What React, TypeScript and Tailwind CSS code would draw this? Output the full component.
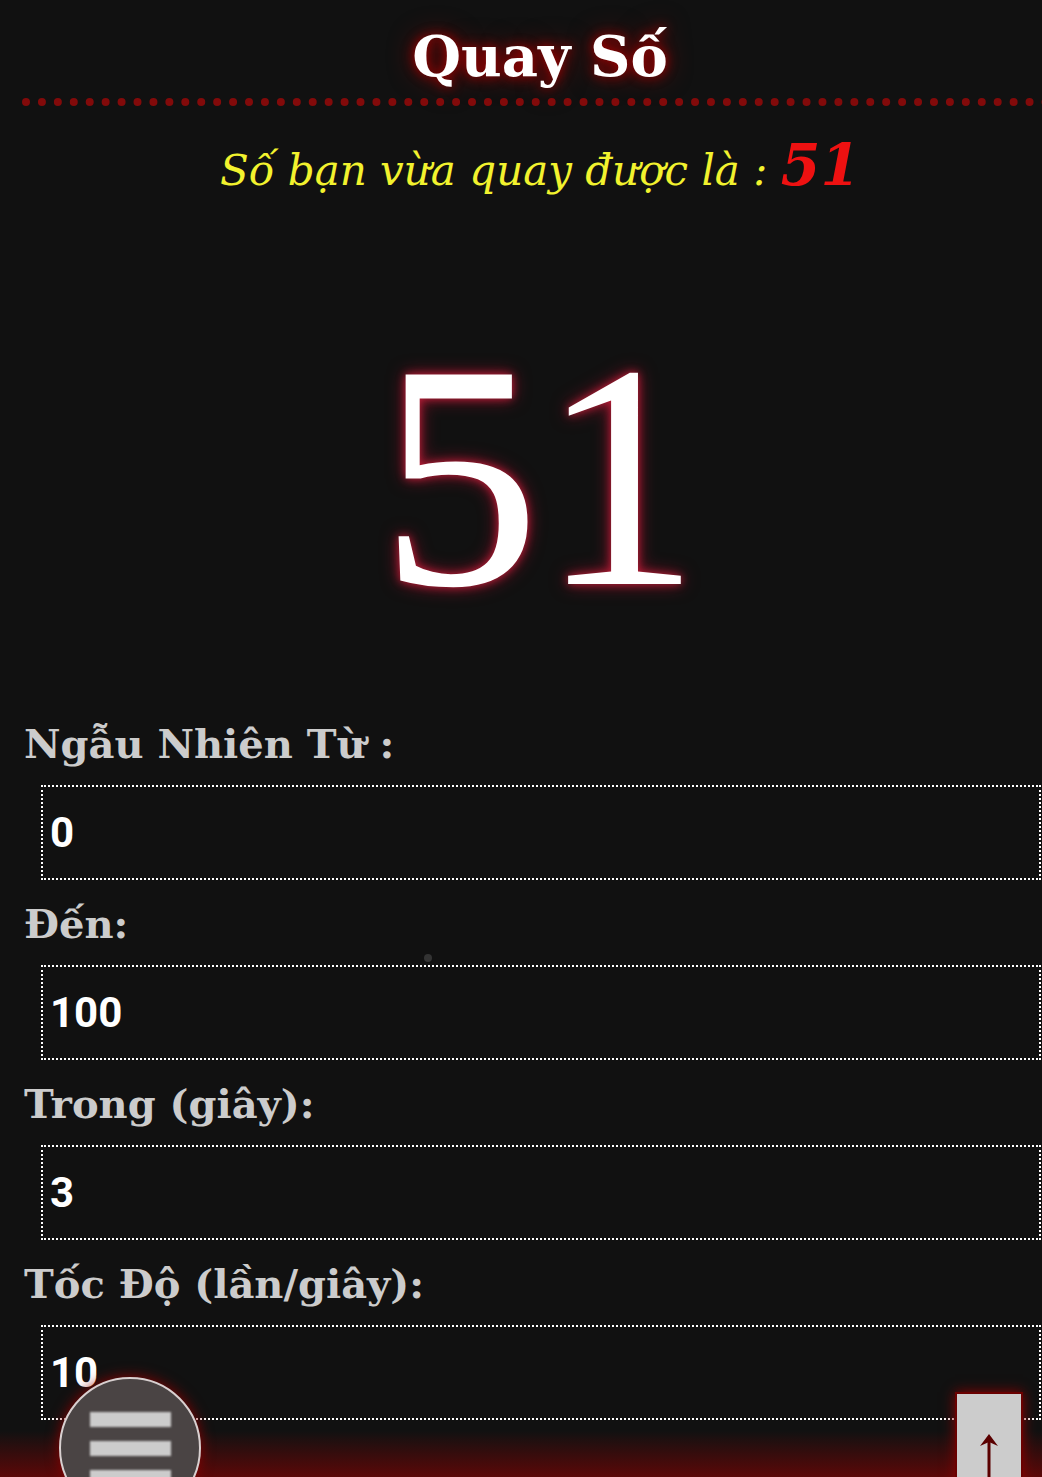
import React from "react";

const serif = "font-['DejaVu_Serif','Liberation_Serif',serif]";

const fields = [
  { label: "Ngẫu Nhiên Từ :", value: "0" },
  { label: "Đến:", value: "100" },
  { label: "Trong (giây):", value: "3" },
  { label: "Tốc Độ (lần/giây):", value: "10" },
];

export default function App() {
  return (
    <div className="relative min-h-[1477px] w-full overflow-hidden bg-[#111111]">
      {/* header */}
      <div className="pl-[38px] pt-[18px] text-center">
        <h1
          className={`${serif} text-[56px] font-bold leading-[76px] text-white [text-shadow:0_0_12px_#b00000,0_0_26px_#700000]`}
        >
          Quay Số
        </h1>
      </div>
      <div className="ml-[22px] mr-[-40px] mt-[4px] border-b-8 border-dotted border-[#820a0a] blur-[0.5px]" />

      <p className={`${serif} mt-[31px] pl-[38px] text-center text-[42px] italic leading-[56px] text-[#f2f22e]`}>
        Số bạn vừa quay được là :{" "}
        <span className="text-[57px] font-bold text-[#ee1111]">51</span>
      </p>

      {/* big number */}
      <div className="mt-[117px] pl-[38px] text-center">
        <span
          className="font-['Liberation_Serif',serif] text-[320px] leading-[320px] text-white [text-shadow:0_0_8px_#c0203a,0_0_18px_#8a1028]"
        >
          51
        </span>
      </div>

      {/* form */}
      <div className="mt-[83px] flex flex-col">
        {fields.map((f) => (
          <div key={f.label} className="flex flex-col">
            <label className={`${serif} pl-[24px] text-[40px] font-bold leading-[50px] text-[#cccccc]`}>
              {f.label}
            </label>
            <div className="ml-[41px] mr-[1px] mt-[16px] mb-[19px] flex h-[95px] items-center border-2 border-dotted border-white pl-[7px]">
              <span className="font-['Roboto',sans-serif] text-[42px] font-bold text-white">{f.value}</span>
            </div>
          </div>
        ))}
      </div>

      <div className="absolute left-[424px] top-[954px] h-[8px] w-[8px] rounded-full bg-[#333333]" />

      {/* bottom glow */}
      <div className="pointer-events-none absolute bottom-0 left-0 right-0 h-[46px] bg-gradient-to-b from-transparent to-[#5c0808]" />

      {/* menu button */}
      <div className="absolute left-[59px] top-[1377px] flex h-[142px] w-[142px] flex-col items-center gap-[14px] rounded-full border-2 border-[#d8d0d0] bg-[#4a4444] pt-[33px] shadow-[0_0_14px_#8a0000]">
        <div className="h-[15px] w-[81px] bg-[#cccccc] blur-[0.8px]" />
        <div className="h-[15px] w-[81px] bg-[#cccccc] blur-[0.8px]" />
        <div className="h-[15px] w-[81px] bg-[#cccccc] blur-[0.8px]" />
      </div>

      {/* to top button */}
      <div className="absolute left-[955px] top-[1392px] flex h-[100px] w-[68px] justify-center border-2 border-[#6a0000] bg-[#cccccc] pt-[38px] shadow-[0_0_12px_#8a0000]">
        <svg width="20" height="60" viewBox="0 0 20 60">
          <path d="M10 6 V60" stroke="#5a0000" strokeWidth="3" fill="none" />
          <path d="M10 2 L19 14 L10 10 L1 14 Z" fill="#5a0000" />
        </svg>
      </div>
    </div>
  );
}
